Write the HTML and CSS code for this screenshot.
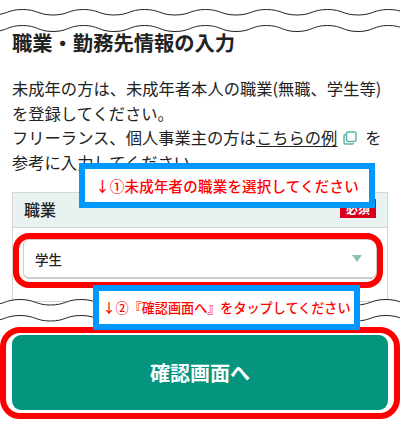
FILE: index.html
```html
<!DOCTYPE html>
<html lang="ja">
<head>
<meta charset="utf-8">
<title>職業・勤務先情報の入力</title>
<link rel="stylesheet" href="styles.css">
</head>
<body>
<div class="page">
  <svg class="wave wave-top" width="400" height="34" viewBox="0 0 400 34" aria-hidden="true">
    <path class="wave-line" d="M-38.500 9.500c15 0 15.500 5.500 30.500 5.500s15.500-5.500 30.500-5.500s15.500 5.500 30.500 5.500s15.500-5.500 30.500-5.500s15.500 5.500 30.500 5.500s15.500-5.500 30.500-5.500s15.500 5.500 30.500 5.500s15.500-5.500 30.500-5.500s15.500 5.500 30.500 5.500s15.500-5.500 30.500-5.500s15.500 5.500 30.500 5.500s15.500-5.500 30.500-5.500s15.500 5.500 30.500 5.500s15.500-5.500 30.500-5.500s15.500 5.500 30.500 5.500s15.500-5.500 30.500-5.500"/>
    <path class="wave-line" d="M-38.500 25.500c15 0 15.500 6 30.500 6s15.500-6 30.500-6s15.500 6 30.500 6s15.500-6 30.500-6s15.500 6 30.500 6s15.500-6 30.500-6s15.500 6 30.500 6s15.500-6 30.500-6s15.500 6 30.500 6s15.500-6 30.500-6s15.500 6 30.500 6s15.500-6 30.500-6s15.500 6 30.500 6s15.500-6 30.500-6s15.500 6 30.500 6s15.500-6 30.500-6"/>
  </svg>
  <main class="content">
    <h1 class="title">職業・勤務先情報の入力</h1>
    <p class="lead">未成年の方は、未成年者本人の職業(無職、学生等)<br>を登録してください。<br>フリーランス、個人事業主の方は<a class="link" href="#">こちらの例</a><svg class="ext" width="14" height="14" viewBox="0 0 14 14" aria-hidden="true"><path d="M3 3.500H2.500A1.500 1.500 0 0 0 1 5v6.500A1.500 1.500 0 0 0 2.500 13H9a1.500 1.500 0 0 0 1.500-1"/><rect x="3.500" y="1" width="9.500" height="9.500" rx="2"/></svg>を<br>参考に入力してください。</p>
    <section class="field">
      <div class="field-head">
        <span class="field-label">職業</span>
        <span class="badge">必須</span>
      </div>
      <div class="field-body">
        <div class="select">
          <span class="select-value">学生</span>
          <span class="caret"></span>
        </div>
        <div class="ring ring-select"></div>
      </div>
    </section>
  </main>
  <svg class="wave wave-bottom" width="400" height="26" viewBox="0 0 400 26" aria-hidden="true">
    <path class="wave-fill" d="M-41 .5c15 0 15.500 5.500 30.500 5.500s15.500-5.500 30.500-5.500s15.500 5.500 30.500 5.500s15.500-5.500 30.500-5.500s15.500 5.500 30.500 5.500s15.500-5.500 30.500-5.500s15.500 5.500 30.500 5.500s15.500-5.500 30.500-5.500s15.500 5.500 30.500 5.500s15.500-5.500 30.500-5.500s15.500 5.500 30.500 5.500s15.500-5.500 30.500-5.500s15.500 5.500 30.500 5.500s15.500-5.500 30.500-5.500s15.500 5.500 30.500 5.500s15.500-5.500 30.500-5.500V26H-41Z"/>
    <path class="wave-line" d="M-41 .5c15 0 15.500 5.500 30.500 5.500s15.500-5.500 30.500-5.500s15.500 5.500 30.500 5.500s15.500-5.500 30.500-5.500s15.500 5.500 30.500 5.500s15.500-5.500 30.500-5.500s15.500 5.500 30.500 5.500s15.500-5.500 30.500-5.500s15.500 5.500 30.500 5.500s15.500-5.500 30.500-5.500s15.500 5.500 30.500 5.500s15.500-5.500 30.500-5.500s15.500 5.500 30.500 5.500s15.500-5.500 30.500-5.500s15.500 5.500 30.500 5.500s15.500-5.500 30.500-5.500"/>
    <path class="wave-line" d="M-41 16.500c15 0 15.500 5.500 30.500 5.500s15.500-5.500 30.500-5.500s15.500 5.500 30.500 5.500s15.500-5.500 30.500-5.500s15.500 5.500 30.500 5.500s15.500-5.500 30.500-5.500s15.500 5.500 30.500 5.500s15.500-5.500 30.500-5.500s15.500 5.500 30.500 5.500s15.500-5.500 30.500-5.500s15.500 5.500 30.500 5.500s15.500-5.500 30.500-5.500s15.500 5.500 30.500 5.500s15.500-5.500 30.500-5.500s15.500 5.500 30.500 5.500s15.500-5.500 30.500-5.500"/>
  </svg>
  <div class="action">
    <button class="submit" type="button">確認画面へ</button>
    <div class="ring ring-submit"></div>
  </div>
  <div class="note note-one">↓①未成年者の職業を選択してください</div>
  <div class="note note-two">↓②『確認画面へ』をタップしてください</div>
</div>
</body>
</html>
```
FILE: styles.css
```css
* { box-sizing: border-box; }
html, body { margin: 0; padding: 0; background: #fff; }
body {
  font-family: "Noto Sans CJK JP", "Noto Sans", sans-serif;
  color: #222;
}
.page {
  position: relative;
  width: 400px;
  height: 437px;
  overflow: hidden;
}
.wave { display: block; }
.wave-line { fill: none; stroke: #222; stroke-width: 1; }
.wave-fill { fill: #fff; }
.wave-bottom { position: relative; margin-top: -3px; }
.content { padding: 0 12px; }
.title {
  margin: -2px 0 0;
  font-size: 20.300px;
  line-height: 20px;
  font-weight: 700;
  color: #222;
}
.lead {
  margin: 24px 0 0;
  font-size: 16.300px;
  line-height: 24.500px;
  color: #222;
  white-space: nowrap;
}
.link { color: #222; text-decoration: underline; text-underline-offset: 2px; }
.ext {
  margin: 0 8px 0 6px;
  vertical-align: -1px;
  fill: none;
  stroke: #5cb5a5;
  stroke-width: 1.500;
}
.field {
  margin-top: 18px;
  border: 1px solid #d5d5d5;
  height: 110px;
}
.field-head {
  display: flex;
  align-items: center;
  justify-content: space-between;
  height: 35px;
  padding: 0 11px 3px;
  background: #e8f3f1;
  border-bottom: 1px solid #d5d5d5;
}
.field-label { font-size: 16px; font-weight: 500; color: #222; }
.badge {
  width: 36px;
  height: 19px;
  background: #d8001c;
  color: #fff;
  font-size: 12px;
  line-height: 19px;
  font-weight: 700;
  text-align: center;
}
.field-body { position: relative; padding: 11px 10px; }
.select {
  display: flex;
  align-items: center;
  justify-content: space-between;
  height: 40px;
  padding: 0 14px 0 11px;
  border: 1px solid #ccc;
  border-bottom-width: 2px;
  border-radius: 6px;
  background: #fff;
}
.select-value { font-size: 13.500px; font-weight: 500; color: #222; }
.caret {
  width: 0;
  height: 0;
  border-left: 5px solid transparent;
  border-right: 5px solid transparent;
  border-top: 7px solid #8fbfb5;
}
.ring {
  position: absolute;
  border: 6px solid #f00;
  pointer-events: none;
}
.ring-select {
  left: 0;
  top: 5px;
  width: 370px;
  height: 55px;
  border-radius: 16px;
}
.action {
  position: relative;
  padding: 11px 12px 0;
  margin-top: -1px;
}
.submit {
  display: block;
  width: 100%;
  height: 75px;
  border: 0;
  border-radius: 9px;
  background: #05957f;
  color: #fff;
  font-family: inherit;
  font-size: 20px;
  font-weight: 700;
}
.ring-submit {
  left: 0;
  top: 3px;
  width: 400px;
  height: 92px;
  border-radius: 20px;
}
.note {
  position: absolute;
  border: 6px solid #0098ff;
  background: #fff;
  color: #f00;
  font-weight: 500;
  display: flex;
  align-items: center;
  justify-content: center;
  white-space: nowrap;
}
.note-one {
  left: 79px;
  top: 163px;
  width: 296px;
  height: 45px;
  font-size: 14.500px;
  letter-spacing: .2px;
}
.note-two {
  left: 93px;
  top: 285px;
  width: 267px;
  height: 45px;
  font-size: 13.100px;
}
```
